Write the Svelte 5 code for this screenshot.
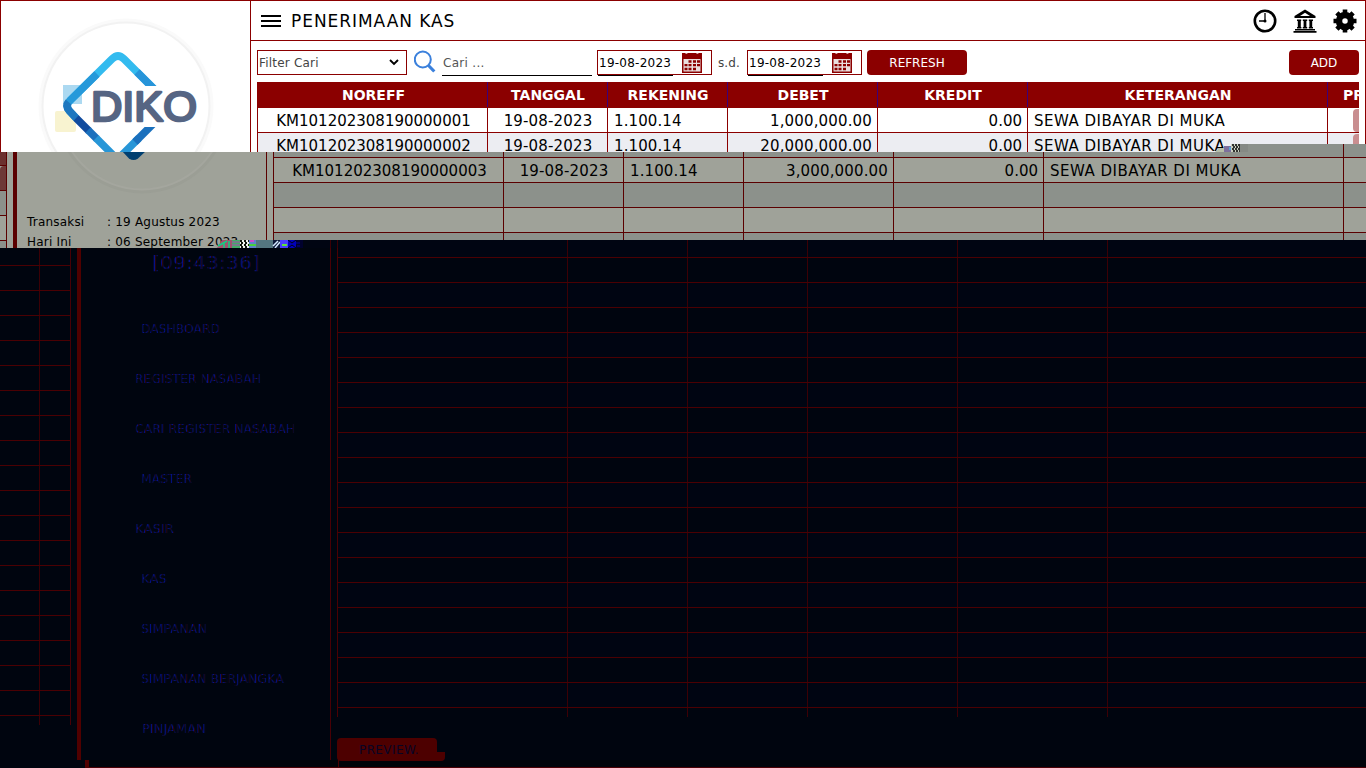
<script module>
  const filled = (cells) => cells[0] !== '';
</script>

<script>
  const heads = ['NOREFF', 'TANGGAL', 'REKENING', 'DEBET', 'KREDIT', 'KETERANGAN', 'PR'];
  const entries = [
    ['KM101202308190000001', '19-08-2023', '1.100.14', '1,000,000.00', '0.00', 'SEWA DIBAYAR DI MUKA'],
    ['KM101202308190000002', '19-08-2023', '1.100.14', '20,000,000.00', '0.00', 'SEWA DIBAYAR DI MUKA'],
    ['KM101202308190000003', '19-08-2023', '1.100.14', '3,000,000.00', '0.00', 'SEWA DIBAYAR DI MUKA']
  ];
  const blank = ['', '', '', '', '', ''];
  const menu = [
    { label: 'DASHBOARD', x: 60, w: 79 },
    { label: 'REGISTER NASABAH', x: 54, w: 126 },
    { label: 'CARI REGISTER NASABAH', x: 54, w: 160 },
    { label: 'MASTER', x: 60, w: 51 },
    { label: 'KASIR', x: 54, w: 39 },
    { label: 'KAS', x: 60, w: 26 },
    { label: 'SIMPANAN', x: 60, w: 66 },
    { label: 'SIMPANAN BERJANGKA', x: 60, w: 143 },
    { label: 'PINJAMAN', x: 61, w: 64 }
  ];
  const rows = Array.from({ length: 18 }, (_, i) => i);
</script>

{#snippet logo(dark)}
  <svg class="logo" class:dark viewBox="0 0 250 210" width="250" height="210">
    <circle class="glow" cx="126" cy="106" r="85.500" />
    <circle class="ring" cx="126" cy="106" r="83.500" />
    {#if !dark}
      <rect x="63" y="85" width="19" height="19" fill="#acd9f1" />
      <rect x="55" y="111" width="21" height="21" rx="2" fill="#f8f3d0" />
      <g fill="none" stroke-width="7.500">
        <path d="M69.500 101 L112 59 Q118 53 124 59 L155 90" stroke="#33bbef" />
        <path d="M97 74 L69.500 101 Q65 106 69.500 111 L77 119" stroke="#2699da" />
        <path d="M137 72 L155 90" stroke="#2794d9" />
        <path d="M68.500 102 Q65 106 69.500 111 L76 118" stroke="#1d77bf" />
        <path d="M76 118 L89 131" stroke="#104b9e" />
        <path d="M88 130 L97 139" stroke="#1b70bd" />
        <path d="M96 138 L113 155 Q118 159 123 154 L139 138" stroke="#2796d7" />
        <path d="M135 142 L155 122" stroke="#1a70bd" />
      </g>
      <path d="M90 86 H170 V127 H94 Z" fill="#fff" />
      <text x="91" y="121" textLength="106" lengthAdjust="spacingAndGlyphs">DIKO</text>
    {:else}
      <path d="M105 150 H131 L122 158.500 Q117.500 161.500 113 158.500 Z" fill="#003f70" />
    {/if}
  </svg>
{/snippet}

{#snippet record(cells, alt)}
  <div class="tr" class:alt>
    {#each cells as c}<span>{c}</span>{/each}<span class="action">{#if filled(cells)}<i></i>{/if}</span>
  </div>
{/snippet}

{#snippet calendar()}
  <svg width="20" height="21" viewBox="0 0 20 21">
    <path d="M0 1h3q1 1.500 3 0h8q1 1.500 3 0h3v20H0Z" fill="#8b0000" />
    <path d="M1.500 7h17v12.500h-17Z" fill="#eadede" />
    <path d="M6.500 9.500h3M11 9.500h3M15 9.500h3M2.500 13.200h3M6.500 13.200h3M11 13.200h3M15 13.200h3M2.500 17h3M6.500 17h3M11 17h3" stroke="#8b0000" stroke-width="2.300" />
  </svg>
{/snippet}

<div class="screen">
  <section class="top">
    <aside>{@render logo(false)}</aside>
    <main>
      <header>
        <svg width="20" height="14" viewBox="0 0 20 14"><path d="M0 2h20M0 7h20M0 12h20" stroke="#000" stroke-width="2" /></svg>
        <h1>PENERIMAAN KAS</h1>
        <nav>
          <svg width="24" height="24" viewBox="0 0 24 24"><circle cx="12" cy="12" r="10.200" fill="none" stroke="#000" stroke-width="2.600" /><path d="M12 4v8H6" fill="none" stroke="#000" stroke-width="1.300" /><circle cx="12" cy="12" r="1.500" /></svg>
          <svg width="24" height="24" viewBox="0 0 24 24"><path d="M12 .5 22.500 7v2H1.500V7Z" /><path d="M12 3.800 17 7H7Z" fill="#fff" /><path d="M4 10.500h4.200v1.500H7.800v6h.6v1.500H4v-1.500h.8v-6H4ZM9.800 10.500h4.400v1.500h-.8v6h.8v1.500H9.800v-1.500h.8v-6h-.8ZM15.800 10.500H20v1.500h-.8v6h.8v1.500h-4.200v-1.500h.6v-6h-.6ZM2 20h20v1.500H2ZM.5 22h23v1.700H.5Z" /></svg>
          <svg width="24" height="24" viewBox="0 0 24 24"><circle cx="12" cy="12" r="6" fill="none" stroke="#000" stroke-width="6.500" /><path d="M12 .5v5M12 18.500v5M.5 12h5M18.500 12h5M3.900 3.900l3.500 3.500M16.600 16.600l3.500 3.500M20.100 3.900l-3.500 3.500M3.900 20.100l3.500-3.500" stroke="#000" stroke-width="4.600" /></svg>
        </nav>
      </header>
      <div class="tools">
        <div class="select">Filter Cari<svg width="10" height="7" viewBox="0 0 10 7"><path d="M1 1l4 4 4-4" fill="none" stroke="#000" stroke-width="1.900" /></svg></div>
        <svg class="search" width="23" height="24" viewBox="0 0 23 24"><circle cx="8.800" cy="9.500" r="8" fill="none" stroke="#3b80dc" stroke-width="2" /><path d="M14.500 15.500l5.800 6" stroke="#3b80dc" stroke-width="3.200" /></svg>
        <div class="find">Cari ...</div>
        <div class="date"><b>19-08-2023</b>{@render calendar()}</div>
        <span class="sd">s.d.</span>
        <div class="date"><b>19-08-2023</b>{@render calendar()}</div>
        <button class="refresh">REFRESH</button>
        <button class="add">ADD</button>
      </div>
      <div class="table">
        <div class="tr head">{#each heads as h}<span>{h}</span>{/each}</div>
        {@render record(entries[0], false)}
        {@render record(entries[1], true)}
      </div>
    </main>
  </section>

  <section class="middle">
    <div class="edge"><p></p><p></p><p></p><p></p><p></p></div>
    <aside>
      <div class="crop">{@render logo(true)}</div>
      <dl><dt>Transaksi</dt><dd>: 19 Agustus 2023</dd><dt>Hari Ini</dt><dd>: 06 September 2023</dd></dl>
    </aside>
    <div class="table">
      <div class="tr alt stub">{#each blank as _}<span></span>{/each}<span></span></div>
      {@render record(entries[2], false)}
      {@render record(blank, true)}
      {@render record(blank, false)}
      {@render record(blank, true)}
    </div>
  </section>

  <section class="bottom">
    <div class="edge"><p></p>{#each rows as r}<p></p>{/each}<p class="tail"></p></div>
    <aside>
      <div class="clock">
        <svg width="110" height="24">
          <defs>
            <linearGradient id="fringe" gradientUnits="userSpaceOnUse" x1="0" y1="0" x2="3.500" y2="0" spreadMethod="repeat">
              <stop offset="0" stop-color="#2c0510" /><stop offset=".35" stop-color="#040a40" /><stop offset=".7" stop-color="#06138a" /><stop offset="1" stop-color="#030830" />
            </linearGradient>
          </defs>
          <text x="0" y="17" textLength="108" lengthAdjust="spacingAndGlyphs">[09:43:36]</text>
        </svg>
      </div>
      {#each menu as m}
        <div class="item" style="padding-left:{m.x}px"><svg width="175" height="16"><text x="0" y="12.500" textLength={m.w} lengthAdjust="spacingAndGlyphs">{m.label}</text></svg></div>
      {/each}
    </aside>
    <div class="content">
      <div class="table">
        <div class="tr alt stub">{#each blank as _}<span></span>{/each}<span></span></div>
        {#each rows as r}{@render record(blank, r % 2 === 1)}{/each}
        <div class="tr tail">{#each blank as _}<span></span>{/each}<span></span></div>
      </div>
      <div class="preview">PREVIEW.</div>
    </div>
  </section>

  <div class="seam upper"></div>
  <svg class="noise first" width="34" height="8"><path d="M0 8 4 4h10v4Z" fill="#b6bda8" /><path d="M9 2h8v6H9Z" fill="#7d6f9d" /><path d="M14 3h3v3h-3Z" fill="#58a4d8" /><path d="M16 0h9v8h-9Z" fill="#c9cfc0" /><path d="M17 1h8M18 3h7M17 5h8M18 7h7" stroke="#000" stroke-width="1.500" stroke-dasharray="2 1" /><path d="M25 0h8v8h-8Z" fill="#858984" /></svg>
  <div class="seam lower"><i></i><span></span><span></span><span></span><span></span><span></span><span></span></div>
  <svg class="noise second" width="90" height="8">
    <path d="M7 0h10v8H2Z" fill="#a0536e" /><path d="M3 6l9-5M9 8V2M14 8V1" stroke="#12cf83" stroke-width="1.500" />
    <path d="M17 0h8v8h-8Z" fill="#43ac68" /><path d="M17 2h8M17 5h8" stroke="#ac48b0" stroke-width="1" />
    <path d="M25 0h9v8h-9Z" fill="#eef5ee" /><path d="M25 1h9M26 3h8M25 5h9M26 7h8" stroke="#101810" stroke-width="2" stroke-dasharray="2 2" />
    <path d="M34 0h7v8h-7Z" fill="#5f82ca" /><path d="M34 5h7" stroke="#49d13a" stroke-width="2" /><path d="M35 1h4" stroke="#d24bca" stroke-width="2" />
    <path d="M41 0h17v8H41Z" fill="#547680" />
    <path d="M58 0h7v8h-7Z" fill="#0d1939" /><path d="M58 6l5-5M60 8l5-6" stroke="#d4e9ff" stroke-width="1.500" />
    <path d="M65 0h8v8h-8Z" fill="#4b40ff" /><path d="M67 5h5" stroke="#5fe43b" stroke-width="2" />
    <path d="M73 0h8v8h-8Z" fill="#0000bd" /><path d="M73 0l4 3 4-3M73 8l4-3 4 3" stroke="#000514" fill="none" />
    <path d="M81 0h7v8h-7Z" fill="#00012e" /><path d="M81 3h4M82 6h3" stroke="#0000a0" />
  </svg>
  <div class="foot"><i></i></div>
</div>

<style>
  :global(body) { margin: 0; overflow: hidden; }
  * { box-sizing: border-box; }
  .screen { position: relative; width: 1366px; height: 768px; overflow: hidden; display: grid; grid-template-rows: 152px 96px 520px; font-family: Verdana, "DejaVu Sans", sans-serif; background: #00050f; color: #000; }
  section { display: flex; overflow: hidden; min-width: 0; }
  .top { --line: #8b0000; background: #fff; border: solid #8b0000; border-width: 1px 1px 0; }
  .top aside { width: 250px; border-right: 1px solid #8b0000; flex: none; }
  .logo { display: block; margin: -1px 0 0 -1px; }
  .glow { fill: none; stroke: #fafafa; stroke-width: 4; }
  .ring { fill: none; stroke: #f2f2f2; stroke-width: 2; }
  .dark .glow { stroke: #9b9e95; }
  .dark .ring { stroke: #a4a69e; }
  .logo text { font: 42px "Liberation Sans", sans-serif; fill: #566583; stroke: #566583; stroke-width: 2.6px; stroke-linejoin: round; }
  main { flex: 1; min-width: 0; }
  header { height: 40px; border-bottom: 1px solid #8b0000; display: flex; align-items: center; padding: 0 8px 0 10px; }
  h1 { margin: 0 0 0 10px; font-size: 17px; letter-spacing: .95px; font-weight: 400; line-height: 24px; }
  nav { margin-left: auto; display: flex; gap: 16px; padding-top: 1px; }
  nav svg { display: block; }
  .tools { height: 41px; display: flex; align-items: flex-start; padding: 9px 6px 0; font-size: 12px; line-height: 24px; letter-spacing: .1px; }
  .select { width: 150px; height: 25px; border: 1px solid #8b0000; color: #444; padding: 0 7px 0 1px; display: flex; align-items: center; justify-content: space-between; letter-spacing: .2px; }
  .search { margin-left: 7px; }
  .find { width: 150px; height: 26px; margin-left: 5px; padding: 1px 0 0 1px; border-bottom: 1px solid #000; color: #555; letter-spacing: .3px; }
  .date { width: 115px; height: 25px; margin-left: 5px; border: 1px solid #8b0000; display: flex; }
  .date b { width: 75px; height: 25px; border-bottom: 1px solid #000; font-weight: 400; padding-left: 1px; white-space: nowrap; letter-spacing: .25px; }
  .date svg { margin: 1px 0 0 9px; }
  .sd { margin-left: 6px; width: 24px; color: #444; white-space: nowrap; padding-top: 1px; }
  button { height: 25px; border: 0; border-radius: 4px; background: #8b0000; color: #fff; font: 12px Verdana, "DejaVu Sans", sans-serif; padding: 0; }
  .refresh { width: 100px; margin-left: 5px; }
  .add { width: 70px; margin-left: auto; }
  .table { overflow: hidden; border-left: 1px solid var(--line); }
  .top .table { margin: 0 6px; }
  .tr { height: 25px; width: 1130px; display: grid; grid-template-columns: 230px 120px 120px 150px 150px 300px 60px; border-bottom: 1px solid var(--line); font-size: 15px; line-height: 26px; white-space: nowrap; }
  .tr > span { border-right: 1px solid var(--col, var(--line)); padding: 0 5px 0 6px; min-width: 0; overflow: hidden; text-align: center; }
  .tr > span:nth-child(1) { padding-left: 7px; }
  .tr > span:nth-child(2) { letter-spacing: .15px; }
  .tr > span:nth-child(3) { letter-spacing: .1px; text-align: left; }
  .tr > span:nth-child(4) { text-align: right; letter-spacing: .15px; }
  .tr > span:nth-child(5) { text-align: right; }
  .tr > span:nth-child(6) { text-align: left; letter-spacing: .5px; }
  .tr.head { height: 26px; background: #8b0000; color: #fff; font-weight: 700; font-size: 14px; line-height: 27px; --col: #3c0078; }
  .tr.head > span { text-align: center; letter-spacing: 0; }
  .tr.head > span:last-child { text-align: left; padding-left: 15px; }
  .alt { background: #ecedf2; }
  .tr > .action { padding: 1px 0 0 25px; }
  .action i { display: block; width: 30px; height: 23px; border-radius: 4px; background: #c98e90; }

  .middle { --line: #5a0000; background: #9fa299; }
  .middle .alt { background: #8c918b; }
  .middle .edge { width: 7px; border-right: 1px solid #5a0000; flex: none; }
  .edge p { margin: 0; height: 25px; border-bottom: 1px solid #5a0000; }
  .middle .edge p:first-child { height: 14px; background: #6b302e; }
  .middle .edge p:nth-child(2) { background: #6e3836; border-radius: 4px 0 0 0; }
  .middle .edge p:nth-child(3), .middle .edge p:nth-child(5) { background: #8c918b; }
  .middle aside { width: 254px; margin: 0 6px; border-left: 4px solid #5a0000; border-right: 1px solid #5a0000; flex: none; }
  .crop { height: 60px; overflow: hidden; }
  .crop .logo { margin: -152px 0 0 -1px; }
  dl { margin: 0; padding-left: 10px; display: grid; grid-template-columns: 80px 1fr; font-size: 12px; line-height: 20px; white-space: nowrap; letter-spacing: .2px; }
  dd { margin: 0; }
  .middle .table { flex: 1; }
  .stub { height: 6px; }

  .bottom { --line: #4a0003; --col: #3c0005; background: #00050f; color: #060b51; }
  .bottom .alt { background: #000512; }
  .bottom .edge { width: 71px; height: 477px; border-right: 1px solid #480005; flex: none; background: linear-gradient(90deg, transparent 39px, #3c0005 39px, #3c0005 40px, transparent 40px); }
  .bottom .edge p { border-color: #4a0003; }
  .bottom .edge p:first-child { height: 18px; }
  .bottom .edge .tail { height: 10px; border: 0; }
  .bottom aside { width: 254px; height: 512px; margin: 0 6px; border-left: 4px solid #500000; border-right: 1px solid #480005; flex: none; }
  .bottom text { fill: url(#fringe); font-size: 12px; }
  .clock { height: 55px; padding: 4px 0 0 71px; }
  .bottom .clock text { font-size: 18px; }
  .item { height: 50px; padding-top: 17px; }
  .item svg, .clock svg { display: block; }
  .content { flex: 1; min-width: 0; position: relative; z-index: 2; height: 516px; }
  .bottom .stub { height: 10px; }
  .bottom .tail { height: 9px; border: 0; }
  .preview { position: relative; z-index: 0; width: 100px; height: 23px; margin-top: 21px; border-radius: 4px; background: #4d0000; color: #080525; font-size: 12px; line-height: 24px; padding-left: 22px; letter-spacing: .4px; }
  .preview::after { content: ""; position: absolute; left: 9px; top: 14px; width: 99px; height: 9px; background: #4d0000; border-radius: 0 0 4px 4px; z-index: -1; }

  .seam { position: absolute; height: 8px; }
  .upper { left: 1232px; top: 144px; width: 134px; background: linear-gradient(90deg, transparent 111px, #5a0000 111px, #5a0000 112px, transparent 112px), #8c918b; }
  .lower { left: 302px; right: 0; top: 240px; background: #000512; display: grid; grid-template-columns: 29px 7px 230px 120px 120px 150px 150px; }
  .lower > * { border-right: 1px solid #3c0005; }
  .noise { position: absolute; }
  .first { left: 1215px; top: 144px; }
  .second { left: 215px; top: 240px; }
  .foot { position: absolute; left: 85px; top: 760px; width: 1281px; height: 8px; border-left: 4px solid #500000; border-bottom: 1px solid #4a0003; background: #000409; }
  .foot i { display: block; width: 250px; height: 7px; border-right: 1px solid #4a0003; }
</style>
